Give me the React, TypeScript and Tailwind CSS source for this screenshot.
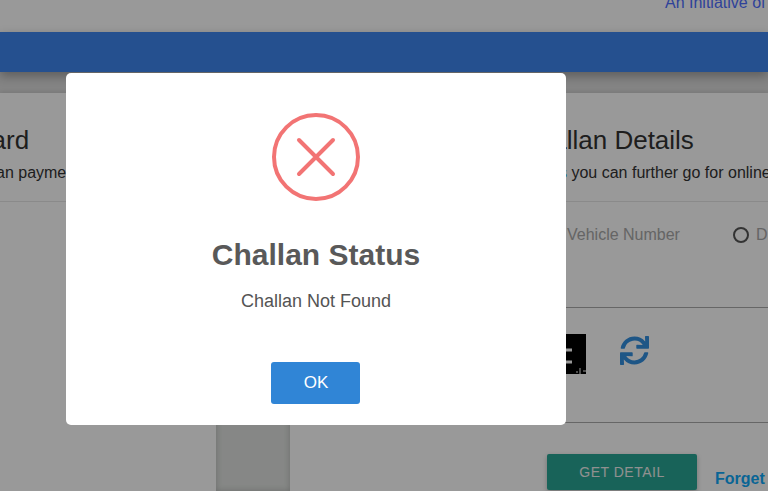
import { FaSync } from "react-icons/fa";

function Page() {
  return (
    <div className="flex h-[491px] w-[768px] flex-col overflow-hidden bg-[#dcdcdc] font-['Liberation_Sans',Arial,sans-serif]">
      <div className="flex h-8 shrink-0 justify-start overflow-hidden bg-white pl-[665px]">
        <span className="mt-[-8px] whitespace-nowrap text-base leading-[22px] text-[#4f6fff]">An Initiative of Ministry</span>
      </div>
      <div className="h-10 shrink-0 bg-[#3f85ee] shadow-[0_4px_10px_rgba(0,0,0,0.3)]" />
      <div className="mt-[21px] flex min-h-0 flex-1 flex-col bg-white shadow-[0_-1px_4px_rgba(0,0,0,0.1)]">
        <div className="flex h-[109px] shrink-0 border-b border-[#e6e6e6]">
          <div className="w-[290px] shrink-0 overflow-hidden pt-8">
            <h2 className="ml-[-98px] whitespace-nowrap text-[26px] leading-[30px] text-[#333]">Dashboard</h2>
            <p className="ml-[-4px] mt-[7px] whitespace-nowrap text-base leading-[22px] text-[#333]">an payment</p>
          </div>
          <div className="min-w-0 flex-1 overflow-hidden pt-8">
            <h2 className="ml-[229px] whitespace-nowrap text-[26px] leading-[30px] text-[#333]">Challan Details</h2>
            <p className="ml-[269px] mt-[7px] whitespace-nowrap text-base leading-[22px] text-[#333]">
              <span className="text-[#1298ff]">s</span> you can further go for online
            </p>
          </div>
        </div>
        <div className="flex min-h-0 flex-1">
          <div className="w-[216px] shrink-0" />
          <div className="w-[74px] shrink-0 bg-[#dfe2df] shadow-[inset_0_0_6px_rgba(0,0,0,0.2)]" />
          <div className="min-w-0 flex-1 overflow-hidden">
            <div className="flex h-[106px] items-start border-b border-[#aaa] pl-[277px] pt-[24px]">
              <span className="whitespace-nowrap text-base leading-[18px] text-[#a8a8a8]">Vehicle Number</span>
              <span className="ml-[53px] mt-[1px] h-4 w-4 shrink-0 rounded-full border-2 border-[#555]" />
              <span className="ml-[7px] whitespace-nowrap text-base leading-[18px] text-[#a8a8a8]">DL Number</span>
            </div>
            <div className="flex h-[115px] items-start border-b border-[#aaa] pl-[230px] pt-[26px]">
              <svg className="shrink-0" width="66" height="40" viewBox="0 0 66 40">
                <rect width="66" height="40" fill="#000" />
                <path d="M46 16h6M46 28h6" stroke="#fff" strokeWidth="3" />
                <path d="M60 34v6M63 37h3M56 38h2" stroke="#fff" strokeWidth="1" />
              </svg>
              <FaSync className="ml-[34px] mt-[2px] shrink-0 text-[29px] text-[#338fe0]" />
            </div>
            <div className="flex items-start pl-[257px] pt-[31px]">
              <button className="h-9 w-[150px] shrink-0 rounded-[2px] bg-[#28a694] text-sm tracking-[0.5px] text-[#f0f0f0] shadow-[0_2px_5px_rgba(0,0,0,0.25)]">GET DETAIL</button>
              <a className="ml-[18px] mt-[13px] whitespace-nowrap text-base font-bold text-[#10a8f8]">Forget Password</a>
            </div>
          </div>
        </div>
      </div>
    </div>
  );
}

export default function App() {
  return (
    <div className="relative h-[491px] w-[768px] overflow-hidden">
      <Page />
      <div className="absolute inset-0 flex items-start bg-[rgba(0,0,0,0.4)] font-['Liberation_Sans',Arial,sans-serif]">
        <div className="ml-[66px] mt-[73px] flex h-[352px] w-[500px] flex-col items-center rounded-[5px] bg-white pt-10">
          <div className="flex h-[88px] w-[88px] items-center justify-center rounded-full border-4 border-[#f27474]">
            <svg width="40" height="40" viewBox="0 0 40 40" fill="none">
              <path d="M3 3L37 37M37 3L3 37" stroke="#f27474" strokeWidth="4" strokeLinecap="round" />
            </svg>
          </div>
          <h2 className="mt-[36px] text-[30px] font-bold leading-[36px] text-[#595959]">Challan Status</h2>
          <p className="mt-[18px] text-[18px] leading-[20px] text-[#545454]">Challan Not Found</p>
          <button className="mr-[2px] mt-[51px] h-[42px] w-[89px] rounded-[3px] bg-[#3085d6] pl-[2px] text-[17px] text-white">OK</button>
        </div>
      </div>
    </div>
  );
}
